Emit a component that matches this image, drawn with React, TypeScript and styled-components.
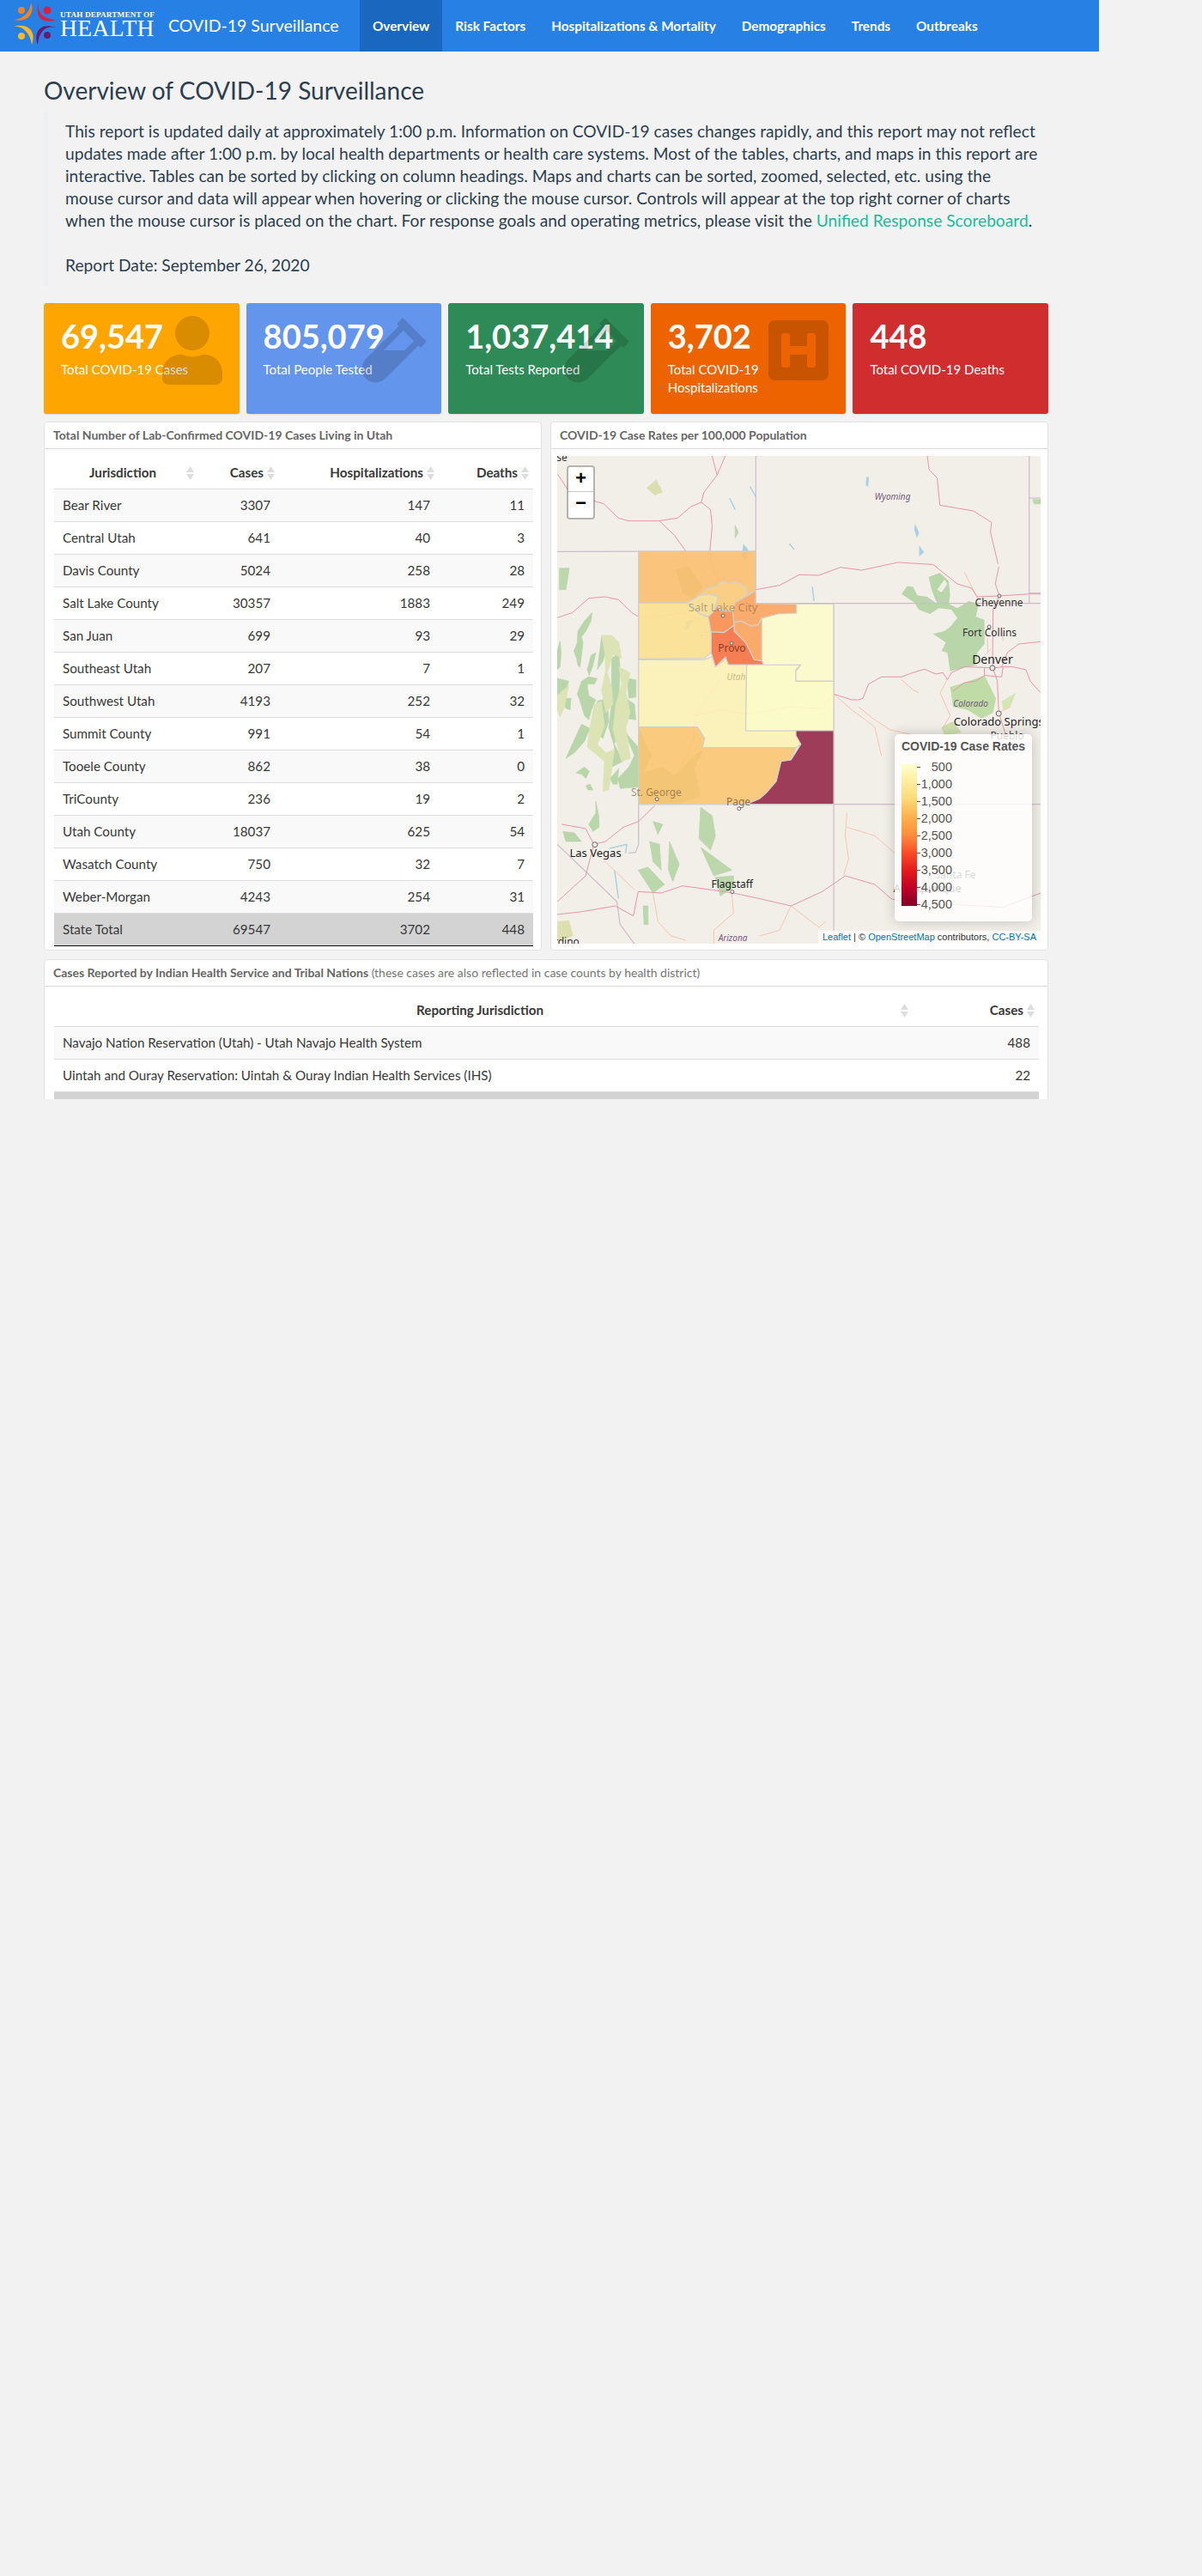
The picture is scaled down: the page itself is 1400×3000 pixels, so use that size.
import { createGlobalStyle, styled } from "styled-components";
import { FaUser, FaVial, FaHSquare } from "react-icons/fa";

const GlobalStyle = createGlobalStyle`
  html, body {
    margin: 0;
    background: #f2f2f2;
    font-family: Lato, "Helvetica Neue", Arial, sans-serif;
    font-size: 14px;
    line-height: 1.5;
    color: #2c3e50;
  }
  * { box-sizing: border-box; }
`;

const Page = styled.div`
  width: 1280px;
  min-height: 3000px;
`;
const NavBar = styled.header`
  display: flex;
  height: 60px;
  background: #2780e3;
  color: #fff;
`;
const Logo = styled.div`
  display: flex;
  align-items: flex-start;
  width: 181px;
  padding-left: 15px;
  flex: none;
  svg { width: 50px; height: 50px; margin-top: 3px; flex: none; }
`;
const LogoWords = styled.div`
  margin-left: 5px;
  font-family: "Liberation Serif", serif;
  white-space: nowrap;
`;
const LogoSmall = styled.div`
  font-size: 9.2px;
  font-weight: 700;
  letter-spacing: 0.15px;
  line-height: 10px;
  margin-top: 12px;
`;
const LogoBig = styled.div`
  font-size: 27.5px;
  line-height: 20px;
  letter-spacing: 0.4px;
  margin-top: 1px;
`;
const Brand = styled.div`
  width: 238px;
  flex: none;
  padding-left: 15px;
  font-size: 19.5px;
  line-height: 60px;
`;
const NavItem = styled.a<{ $active?: boolean }>`
  padding: 0 15px;
  font-size: 15.3px;
  font-weight: 700;
  line-height: 60px;
  background: ${(p) => (p.$active ? "#1967be" : "transparent")};
`;
const Main = styled.main`
  padding: 30px 59px 0 51px;
`;
const Title = styled.h3`
  margin: 0 0 8px;
  font-size: 28px;
  font-weight: 400;
  line-height: 31px;
`;
const Quote = styled.blockquote`
  margin: 0 0 20px;
  padding: 11px 0 10.75px 20px;
  border-left: 5px solid #ecf0f1;
  font-size: 19.2px;
  line-height: 26px;
  white-space: nowrap;
`;
const Link = styled.a`
  color: #18bc9c;
`;
const Boxes = styled.section`
  display: grid;
  grid-template-columns: repeat(5, 1fr);
  gap: 8px;
  margin-bottom: 9px;
`;
const Box = styled.div<{ $bg: string }>`
  position: relative;
  height: 129px;
  padding: 15px 20px;
  border-radius: 3px;
  background: ${(p) => p.$bg};
  color: #fff;
  box-shadow: 0 1px 1px rgba(0, 0, 0, 0.1);
  overflow: hidden;
`;
const BoxValue = styled.div`
  font-size: 38px;
  font-weight: 700;
  line-height: 46px;
  margin-bottom: 6px;
`;
const BoxLabel = styled.div`
  font-size: 15px;
  line-height: 21px;
`;
const BoxIcon = styled.div`
  position: absolute;
  top: 15px;
  right: 15px;
  line-height: 0;
  color: rgba(0, 0, 0, 0.15);
`;
const TwoCol = styled.section`
  display: grid;
  grid-template-columns: 580px 580px;
  gap: 10px;
  margin-bottom: 10px;
`;
const Card = styled.div`
  background: #fff;
  border: 1px solid #e4e4e4;
  border-radius: 4px;
  height: 616px;
`;
const ClippedCard = styled(Card)`
  height: 163px;
  width: 1170px;
  overflow: hidden;
  border-bottom: 0;
  border-radius: 4px 4px 0 0;
`;
const CardHead = styled.div`
  height: 31px;
  padding: 0 10px;
  border-bottom: 1px solid #ddd;
  color: #777;
  font-size: 14px;
  line-height: 30px;
  white-space: nowrap;
  b { color: #666; font-weight: 700; }
`;
const CardBody = styled.div`
  padding: 9px 10px 0 11px;
`;
const Table = styled.table`
  width: 100%;
  border-collapse: collapse;
  table-layout: fixed;
  color: #383838;
  font-size: 15.2px;
  line-height: 21px;
`;
const Col = styled.col<{ $w: number }>`
  width: ${(p) => p.$w}px;
`;
const Th = styled.th<{ $center?: boolean }>`
  position: relative;
  height: 38px;
  padding: 8px 18px 8px 10px;
  border-bottom: 1px solid #ddd;
  font-weight: 700;
  text-align: ${(p) => (p.$center ? "center" : "right")};
  white-space: nowrap;
`;
const SortIcon = styled.svg`
  position: absolute;
  right: 5px;
  top: 11px;
  width: 9px;
  height: 16px;
  fill: #ddd;
`;
const Tr = styled.tr<{ $odd: boolean }>`
  background: ${(p) => (p.$odd ? "#f9f9f9" : "#fff")};
`;
const Td = styled.td<{ $left?: boolean }>`
  height: 38px;
  padding: 8px 10px;
  border-bottom: 1px solid #ddd;
  text-align: ${(p) => (p.$left ? "left" : "right")};
  white-space: nowrap;
`;
const TotalRow = styled.tr`
  background: #d3d3d3;
  td { border-bottom: 1px solid #111; }
`;
const MapBox = styled.div`
  position: relative;
  width: 563px;
  height: 568px;
  margin: 8px 0 0 7px;
  overflow: hidden;
  background: #f2efe9;
  svg.base { display: block; }
`;
const MapText = styled.text<{ $size: number; $fill: string; $italic?: boolean }>`
  font-family: "Noto Sans", sans-serif;
  font-size: ${(p) => p.$size}px;
  font-style: ${(p) => (p.$italic ? "italic" : "normal")};
  fill: ${(p) => p.$fill};
  text-anchor: middle;
`;
const Zoom = styled.div`
  position: absolute;
  left: 11px;
  top: 11px;
  width: 33px;
  border: 2px solid rgba(0, 0, 0, 0.25);
  border-radius: 4px;
  background-clip: padding-box;
`;
const ZoomBtn = styled.div<{ $last?: boolean }>`
  height: 29.5px;
  background: #fff;
  color: #000;
  font-family: "Liberation Mono", monospace;
  font-size: 22px;
  font-weight: 700;
  line-height: 29px;
  text-align: center;
  border-bottom: ${(p) => (p.$last ? "0" : "1px solid #ccc")};
  border-radius: ${(p) => (p.$last ? "0 0 2px 2px" : "2px 2px 0 0")};
`;
const Legend = styled.div`
  position: absolute;
  right: 10px;
  bottom: 26px;
  width: 160px;
  height: 218px;
  padding: 6px 8px;
  border-radius: 5px;
  background: rgba(255, 255, 255, 0.8);
  box-shadow: 0 0 15px rgba(0, 0, 0, 0.2);
  color: #555;
  font-family: "Liberation Sans", Arial, sans-serif;
`;
const LegendTitle = styled.div`
  font-size: 14px;
  font-weight: 700;
  line-height: 17px;
  margin-bottom: 12px;
  white-space: nowrap;
`;
const LegendScale = styled.div`
  display: flex;
`;
const LegendBar = styled.div`
  width: 18px;
  height: 165px;
  background: linear-gradient(
    #ffffcc, #ffeda0 12%, #fed976 25%, #feb24c 37%, #fd8d3c 50%, #fc4e2a 62%, #e31a1c 75%, #bd0026 88%, #800026
  );
`;
const LegendLabels = styled.div`
  display: flex;
  flex-direction: column;
  width: 41px;
  margin-top: -7px;
  font-size: 14.5px;
  line-height: 20px;
  text-align: right;
`;
const LegendLabel = styled.div`
  position: relative;
  &::before {
    content: "";
    position: absolute;
    left: 0;
    top: 10px;
    width: 4px;
    height: 1px;
    background: #555;
  }
`;
const Attribution = styled.div`
  position: absolute;
  right: 0;
  bottom: 0;
  height: 15px;
  padding: 0 5px;
  background: rgba(255, 255, 255, 0.7);
  color: #333;
  font-family: "Liberation Sans", Arial, sans-serif;
  font-size: 11px;
  line-height: 15px;
  white-space: nowrap;
  a { color: #0078a8; }
`;

const rows: [string, number, number, number][] = [
  ["Bear River", 3307, 147, 11],
  ["Central Utah", 641, 40, 3],
  ["Davis County", 5024, 258, 28],
  ["Salt Lake County", 30357, 1883, 249],
  ["San Juan", 699, 93, 29],
  ["Southeast Utah", 207, 7, 1],
  ["Southwest Utah", 4193, 252, 32],
  ["Summit County", 991, 54, 1],
  ["Tooele County", 862, 38, 0],
  ["TriCounty", 236, 19, 2],
  ["Utah County", 18037, 625, 54],
  ["Wasatch County", 750, 32, 7],
  ["Weber-Morgan", 4243, 254, 31],
];

// map shapes were traced from three crops, so each list keeps its crop's coordinates
const wideCounties: [string, string][] = [
  ["#fdf1b2", "271,865 470,865 495,855 505,888 540,860 545,882 600,882 597,1113 750,1113 765,1160 750,1172 465,1172 472,1140 450,1100 271,1100"],
  ["#fdfbc4", "600,882 765,882 750,900 750,940 865,940 865,1113 597,1113"],
  ["#fcc46c", "271,1100 450,1100 472,1140 465,1172 750,1172 735,1215 705,1220 690,1290 660,1330 640,1350 600,1370 271,1370"],
  ["#8f1f42", "750,1113 865,1113 865,1370 600,1370 640,1350 660,1330 690,1290 705,1220 735,1215 765,1160 750,1130"],
];

const centerCounties: [string, string][] = [
  ["#fdbd6b", "-169,6 240,6 240,145 215,155 205,130 175,112 150,118 125,110 108,125 72,135 45,160 0,187 -169,187"],
  ["#fbc974", "45,160 72,135 108,125 125,110 150,118 175,112 205,130 215,155 170,185 160,215 130,215 100,200 110,165 80,155"],
  ["#f7dc90", "0,187 45,160 80,155 110,165 100,200 90,220 75,235 45,225 20,200"],
  ["#fde08e", "-169,187 0,187 20,200 45,225 75,235 85,290 85,360 60,380 -169,382"],
  ["#f98948", "75,235 90,220 108,195 115,215 160,215 165,265 130,290 85,288"],
  ["#fba05a", "168,185 240,145 240,188 383,190 383,222 320,225 262,240 250,262 225,268 190,250 165,255 160,215"],
  ["#fb9f57", "190,250 225,268 250,262 262,240 262,388 235,385 205,325 165,285 165,255"],
  ["#f66b3d", "85,288 130,290 165,265 165,285 205,325 235,385 267,390 267,402 145,402 135,375 100,410 85,360"],
  ["#fdfcc9", "262,240 320,225 383,222 383,190 513,190 513,459 381,459 381,425 398,403 267,402 262,388"],
];

const westForests = [
  "72,165 95,130 122,100 118,130 100,165 85,185 90,205 80,290 72,285 68,260 58,235 70,205",
  "0,235 10,200 14,240 10,290 0,300",
  "118,250 135,240 125,285 112,320 105,300",
  "110,325 140,330 130,350 105,350 110,390 135,405 120,440 110,475 95,460 80,410 70,385 85,340",
  "0,330 40,340 30,375 0,390",
  "20,400 48,400 45,440 30,435",
  "155,185 175,210 160,270 140,300 145,260",
  "190,260 215,240 220,300 215,400 200,480 215,500 200,560 230,620 190,640 200,570 180,500 190,420",
  "245,330 275,335 275,395 250,400",
  "240,400 270,420 275,475 240,470",
  "235,515 283,570 283,710 220,715 212,680 250,640 270,600",
  "140,410 175,400 180,480 160,540 130,520",
  "30,610 85,490 115,505 95,550 60,590",
  "65,660 95,640 112,655 100,680 85,665",
  "185,680 215,645 210,700 195,700",
  "100,705 115,700 125,720 108,720",
  "110,840 135,800 135,760 145,810 147,850 125,865",
  "20,865 60,870 85,900 30,900",
  "285,500 310,560 330,600 300,660 285,690",
  "300,660 370,640 410,670 480,600 510,580 480,640 500,740 420,770 285,770 285,690",
];

const westScrub = [
  "155,180 190,180 215,205 225,260 195,245 175,310 190,360 195,420 170,450 155,370 170,300 165,230",
  "215,290 255,310 240,380 255,450 240,500 255,610 225,620 195,510 205,420 225,350",
  "130,420 155,410 165,500 140,560 170,590 200,580 180,720 160,725 165,620 130,590 105,570 115,500",
  "0,390 40,355 25,430 10,465 0,440",
];

const wideForests = [
  "30,545 60,545 50,620 30,620",
  "385,550 425,540 465,610 440,650 405,630",
  "460,1380 495,1410 505,1480 490,1530 455,1490",
  "460,1520 555,1600 500,1620",
  "315,1430 345,1440 330,1475",
  "305,1500 335,1510 340,1600 315,1570",
  "365,1500 395,1580 375,1640 362,1600",
  "270,1600 300,1590 350,1650 315,1680",
  "505,1625 560,1620 560,1660 520,1690",
  "285,1725 300,1725 300,1790 288,1790",
  "565,395 575,420 565,440",
  "1470,305 1495,305 1495,320 1475,320",
];

const coloradoForest =
  "150,95 170,68 190,70 205,100 240,105 275,130 255,80 245,35 285,22 315,50 320,100 315,130 345,145 385,120 420,130 410,175 440,185 440,270 415,300 410,345 380,350 320,365 310,300 290,295 305,265 260,235 300,225 320,210 345,180 325,150 280,145 250,165 210,150 195,125";

const coloradoRoads = [
  "0,465 15,460 35,410 80,385 150,385 190,370 230,358 270,375 295,370 310,395 325,370 370,350 440,352 470,355 500,350 540,350 585,360 600,400 636,440",
  "270,0 320,40 345,60 395,75 415,105 492,102 600,95 636,95",
  "490,0 478,60 492,102 470,150 468,350 485,400 490,510 515,590",
  "500,350 520,300 560,270 636,262",
  "440,352 440,380 500,385 505,350",
  "330,435 370,405 410,400 440,380",
];

const coloradoMinorRoads = [
  "150,395 190,430 210,440",
  "0,490 50,530 110,570 200,590",
  "310,395 285,440 320,520 290,570",
  "500,210 505,260",
  "440,310 460,290",
  "415,110 370,20",
  "450,250 452,300",
  "490,510 530,490",
];

const roads = [
  "24,215 55,270",
  "135,310 165,320 210,370 240,380 330,380 390,370 430,330 462,315 470,280 510,220 535,153",
  "495,153 510,220",
  "462,315 490,340 495,400 488,486",
  "335,380 380,430 415,486",
  "24,718 70,700 120,650 170,645 210,655 250,700 271,715",
  "628,620 700,605 760,568 820,570 885,542 950,552 1060,525 1165,532 1178,540",
  "1150,153 1155,200 1180,230 1188,325 1290,345 1345,385 1342,420 1365,530",
  "865,985 920,1005 940,1005",
  "38,1440 110,1455 135,1510 170,1500 225,1450 271,1430 320,1375",
  "135,1510 110,1620 24,1710",
  "24,1755 100,1745 200,1725 255,1760 270,1675",
  "270,1675 340,1680 405,1655 500,1670 560,1680 640,1700 735,1725 830,1675 900,1620 990,1650 1040,1700 1100,1720 1230,1720 1380,1730 1495,1680",
];

const minorRoads = [
  "271,715 330,715 400,700 470,730",
  "488,486 495,540 510,590",
  "520,930 480,1000 442,1060 520,1040 600,1055 730,1030 830,1035 865,985",
  "865,985 920,1040 990,1100 1010,1200",
  "160,1560 260,1670",
  "315,1680 330,1780 370,1830 415,1845",
  "555,1680 560,1750 500,1810 500,1856",
  "735,1725 700,1810 640,1830",
  "735,1725 820,1800 840,1780",
  "905,1400 900,1480 910,1560 895,1620",
  "905,1450 990,1480 1010,1500 1050,1540",
  "442,1060 440,1140 380,1290 360,1370",
];

const stateLines = [
  "628,153 628,668",
  "628,668 1495,668",
  "865,668 865,1856",
  "271,486 271,1510 262,1538 240,1540",
  "24,487 628,486",
  "271,1370 1495,1370",
  "1460,153 1460,668",
  "1460,300 1495,300",
  "1460,632 1495,632",
  "24,1510 205,1710 215,1790 260,1860",
];

const water = [
  "590,460 605,480 595,512 585,500",
  "420,730 440,725 415,765 408,755",
  "965,225 972,228 970,262 962,255",
  "1112,390 1125,420 1118,440 1110,410",
  "1125,465 1140,490 1125,505",
];

const waterLines = [
  "610,260 628,295",
  "548,300 565,340",
  "800,610 805,660",
  "182,1525 235,1510 232,1540",
  "198,1600 210,1700",
  "730,460 745,480",
];

const SX = 563 / 1471;
const SY = 1 / 3;
const mapX = (x: number) => x * SX - 9;
const mapY = (y: number) => y * SY - 51;

const labels: { t: string; x: number; y: number; s: number; c: string; i?: boolean }[] = [
  { t: "se", x: 38, y: 170, s: 12, c: "#333" },
  { t: "Wyoming", x: 1044, y: 305, s: 10, c: "#76597e", i: true },
  { t: "Salt Lake City", x: 528, y: 697, s: 13, c: "rgba(80,70,50,.4)" },
  { t: "Provo", x: 555, y: 838, s: 12, c: "#8c3f26" },
  { t: "Utah", x: 568, y: 936, s: 10, c: "#c9b98a", i: true },
  { t: "Cheyenne", x: 1368, y: 677, s: 12, c: "#333" },
  { t: "Fort Collins", x: 1339, y: 783, s: 12, c: "#333" },
  { t: "Denver", x: 1348, y: 878, s: 14, c: "#222" },
  { t: "Colorado", x: 1282, y: 1030, s: 10, c: "#76597e", i: true },
  { t: "Colorado Springs", x: 1367, y: 1094, s: 13, c: "#222" },
  { t: "Pueblo", x: 1393, y: 1142, s: 12, c: "#444" },
  { t: "St. George", x: 325, y: 1342, s: 12, c: "rgba(110,80,50,.6)" },
  { t: "Page", x: 575, y: 1374, s: 12, c: "rgba(90,70,50,.7)" },
  { t: "Las Vegas", x: 140, y: 1553, s: 13, c: "#222" },
  { t: "Flagstaff", x: 556, y: 1663, s: 12, c: "#222" },
  { t: "Santa Fe", x: 1235, y: 1628, s: 12, c: "#444" },
  { t: "Albuquerque", x: 1150, y: 1677, s: 13, c: "#333" },
  { t: "Arizona", x: 558, y: 1848, s: 10, c: "#76597e", i: true },
  { t: "rdino", x: 52, y: 1864, s: 12, c: "#333" },
];

const cityDots: [number, number, number][] = [
  [528, 711, 2],
  [554, 807, 2],
  [1369, 642, 2],
  [1338, 750, 2],
  [1348, 894, 3],
  [1367, 1053, 3],
  [138, 1511, 3],
  [556, 1676, 2],
  [577, 1385, 2],
  [327, 1352, 2],
];

function Sort() {
  return (
    <SortIcon viewBox="0 0 9 16">
      <path d="M4.5 0 9 7H0zM0 9h9l-4.5 7z" />
    </SortIcon>
  );
}

function UtahLogo() {
  return (
    <svg viewBox="15 3 50 50">
      <circle cx="25" cy="12" r="4" fill="#f58220" />
      <path d="M15 23C26 23 35 15 36 3 41 15 33 27 15 23Z" fill="#f58220" />
      <circle cx="55" cy="12" r="4.5" fill="#e31b3c" />
      <path d="M45 3C43 15 50 22 65 23 55 27 39 25 45 3Z" fill="#e31b3c" />
      <circle cx="25" cy="42" r="4" fill="#fdb827" />
      <path d="M15 31C26 29 35 38 37 52 42 40 36 25 15 31Z" fill="#fdb827" />
      <circle cx="55" cy="41" r="4" fill="#6a1b6e" />
      <path d="M65 32C52 29 45 38 44 52 39 40 45 25 65 32Z" fill="#6a1b6e" />
    </svg>
  );
}

function Lines({ items, color, width }: { items: string[]; color: string; width: number }) {
  return (
    <>
      {items.map((p) => (
        <polyline
          key={p}
          points={p}
          fill="none"
          stroke={color}
          strokeWidth={width}
          strokeLinejoin="round"
          vectorEffect="non-scaling-stroke"
        />
      ))}
    </>
  );
}

function Shapes({ items, color }: { items: string[]; color: string }) {
  return (
    <>
      {items.map((p) => (
        <polygon key={p} points={p} fill={color} stroke={color} strokeWidth="2" strokeLinejoin="round" />
      ))}
    </>
  );
}

function Counties({ items }: { items: [string, string][] }) {
  return (
    <>
      {items.map(([fill, p]) => (
        <polygon
          key={p}
          points={p}
          fill={fill}
          fillOpacity="0.86"
          stroke="#d2d0cb"
          strokeWidth="1.2"
          vectorEffect="non-scaling-stroke"
        />
      ))}
    </>
  );
}

function CaseMap() {
  const wide = `translate(-9,-51) scale(${SX},${SY})`;
  return (
    <MapBox>
      <svg className="base" width="563" height="568" viewBox="0 0 563 568">
        <g transform="translate(0,149) scale(0.3333)">
          <Shapes items={westForests} color="#b9d6aa" />
          <Shapes items={westScrub} color="#dce3b4" />
        </g>
        <g transform="translate(351,129) scale(0.3333)">
          <polygon points={coloradoForest} fill="#b9d6aa" />
          <polygon points="275,80 300,45 310,60 290,90" fill="#f2efe9" />
          <polygon points="320,420 370,405 440,380 480,460 470,510 430,530 380,500 330,490" fill="#bfdba6" />
          <polygon points="500,470 550,440 530,490 505,500" fill="#d5e6b3" />
          <polygon points="290,560 330,540 360,580 300,590" fill="#cfe0b0" />
          <Lines items={coloradoMinorRoads} color="#f8c4ae" width={1} />
          <Lines items={coloradoRoads} color="#ea94a8" width={1} />
        </g>
        <g transform={wide}>
          <Shapes items={wideForests} color="#bbd7ab" />
          <polygon points="295,265 325,235 345,280 320,290" fill="#dadfb0" />
          <polygon points="24,1780 60,1775 72,1830 24,1850" fill="#dde0ad" />
          {water.map((p) => (
            <polygon key={p} points={p} fill="#a9d3e4" />
          ))}
          <Lines items={waterLines} color="#a9d3e4" width={1.5} />
          <Lines items={stateLines} color="#cdbccb" width={1.2} />
          <Lines items={minorRoads} color="#f7c6b0" width={1} />
          <Lines items={roads} color="#ea94a8" width={1} />
          <Counties items={wideCounties} />
        </g>
        <g transform="translate(151,109) scale(0.3333)">
          <Counties items={centerCounties} />
        </g>
        {cityDots.map(([x, y, r]) => (
          <circle key={x} cx={mapX(x)} cy={mapY(y)} r={r} fill="rgba(255,255,255,.6)" stroke="#666" strokeWidth="1" />
        ))}
        {labels.map((l) => (
          <MapText key={l.t} x={mapX(l.x)} y={mapY(l.y)} $size={l.s} $fill={l.c} $italic={l.i}>
            {l.t}
          </MapText>
        ))}
      </svg>
      <Zoom>
        <ZoomBtn>+</ZoomBtn>
        <ZoomBtn $last>−</ZoomBtn>
      </Zoom>
      <Legend>
        <LegendTitle>COVID-19 Case Rates</LegendTitle>
        <LegendScale>
          <LegendBar />
          <LegendLabels>
            {["500", "1,000", "1,500", "2,000", "2,500", "3,000", "3,500", "4,000", "4,500"].map((v) => (
              <LegendLabel key={v}>{v}</LegendLabel>
            ))}
          </LegendLabels>
        </LegendScale>
      </Legend>
      <Attribution>
        <a>Leaflet</a> | © <a>OpenStreetMap</a> contributors, <a>CC-BY-SA</a>
      </Attribution>
    </MapBox>
  );
}

export default function App() {
  return (
    <Page>
      <GlobalStyle />
      <NavBar>
        <Logo>
          <UtahLogo />
          <LogoWords>
            <LogoSmall>UTAH DEPARTMENT OF</LogoSmall>
            <LogoBig>HEALTH</LogoBig>
          </LogoWords>
        </Logo>
        <Brand>COVID-19 Surveillance</Brand>
        <NavItem $active>Overview</NavItem>
        <NavItem>Risk Factors</NavItem>
        <NavItem>Hospitalizations &amp; Mortality</NavItem>
        <NavItem>Demographics</NavItem>
        <NavItem>Trends</NavItem>
        <NavItem>Outbreaks</NavItem>
      </NavBar>
      <Main>
        <Title>Overview of COVID-19 Surveillance</Title>
        <Quote>
          This report is updated daily at approximately 1:00 p.m. Information on COVID-19 cases changes rapidly, and
          this report may not reflect
          <br />
          updates made after 1:00 p.m. by local health departments or health care systems. Most of the tables, charts,
          and maps in this report are
          <br />
          interactive. Tables can be sorted by clicking on column headings. Maps and charts can be sorted, zoomed,
          selected, etc. using the
          <br />
          mouse cursor and data will appear when hovering or clicking the mouse cursor. Controls will appear at the top
          right corner of charts
          <br />
          when the mouse cursor is placed on the chart. For response goals and operating metrics, please visit the{" "}
          <Link>Unified Response Scoreboard</Link>.
          <br />
          <br />
          Report Date: September 26, 2020
        </Quote>
        <Boxes>
          <Box $bg="#ffa500">
            <BoxValue>69,547</BoxValue>
            <BoxLabel>Total COVID-19 Cases</BoxLabel>
            <BoxIcon>
              <FaUser size={80} />
            </BoxIcon>
          </Box>
          <Box $bg="#6495ed">
            <BoxValue>805,079</BoxValue>
            <BoxLabel>Total People Tested</BoxLabel>
            <BoxIcon>
              <FaVial size={80} />
            </BoxIcon>
          </Box>
          <Box $bg="#2e8b57">
            <BoxValue>1,037,414</BoxValue>
            <BoxLabel>Total Tests Reported</BoxLabel>
            <BoxIcon>
              <FaVial size={80} />
            </BoxIcon>
          </Box>
          <Box $bg="#ed6300">
            <BoxValue>3,702</BoxValue>
            <BoxLabel>
              Total COVID-19
              <br />
              Hospitalizations
            </BoxLabel>
            <BoxIcon>
              <FaHSquare size={80} />
            </BoxIcon>
          </Box>
          <Box $bg="#d02d2f">
            <BoxValue>448</BoxValue>
            <BoxLabel>Total COVID-19 Deaths</BoxLabel>
          </Box>
        </Boxes>
        <TwoCol>
          <Card>
            <CardHead>
              <b>Total Number of Lab-Confirmed COVID-19 Cases Living in Utah</b>
            </CardHead>
            <CardBody>
              <Table>
                <colgroup>
                  <Col $w={168} />
                  <Col $w={94} />
                  <Col $w={186} />
                  <Col $w={110} />
                </colgroup>
                <thead>
                  <tr>
                    <Th $center>
                      Jurisdiction
                      <Sort />
                    </Th>
                    <Th>
                      Cases
                      <Sort />
                    </Th>
                    <Th>
                      Hospitalizations
                      <Sort />
                    </Th>
                    <Th>
                      Deaths
                      <Sort />
                    </Th>
                  </tr>
                </thead>
                <tbody>
                  {rows.map((r, i) => (
                    <Tr key={r[0]} $odd={i % 2 === 0}>
                      <Td $left>{r[0]}</Td>
                      <Td>{r[1]}</Td>
                      <Td>{r[2]}</Td>
                      <Td>{r[3]}</Td>
                    </Tr>
                  ))}
                  <TotalRow>
                    <Td $left>State Total</Td>
                    <Td>69547</Td>
                    <Td>3702</Td>
                    <Td>448</Td>
                  </TotalRow>
                </tbody>
              </Table>
            </CardBody>
          </Card>
          <Card>
            <CardHead>
              <b>COVID-19 Case Rates per 100,000 Population</b>
            </CardHead>
            <CaseMap />
          </Card>
        </TwoCol>
        <ClippedCard>
          <CardHead>
            <b>Cases Reported by Indian Health Service and Tribal Nations</b> (these cases are also reflected in case
            counts by health district)
          </CardHead>
          <CardBody>
            <Table>
              <colgroup>
                <Col $w={1000} />
                <Col $w={147} />
              </colgroup>
              <thead>
                <tr>
                  <Th $center>
                    Reporting Jurisdiction
                    <Sort />
                  </Th>
                  <Th>
                    Cases
                    <Sort />
                  </Th>
                </tr>
              </thead>
              <tbody>
                <Tr $odd>
                  <Td $left>Navajo Nation Reservation (Utah) - Utah Navajo Health System</Td>
                  <Td>488</Td>
                </Tr>
                <Tr $odd={false}>
                  <Td $left>Uintah and Ouray Reservation: Uintah &amp; Ouray Indian Health Services (IHS)</Td>
                  <Td>22</Td>
                </Tr>
                <TotalRow>
                  <Td $left />
                  <Td />
                </TotalRow>
              </tbody>
            </Table>
          </CardBody>
        </ClippedCard>
      </Main>
    </Page>
  );
}
